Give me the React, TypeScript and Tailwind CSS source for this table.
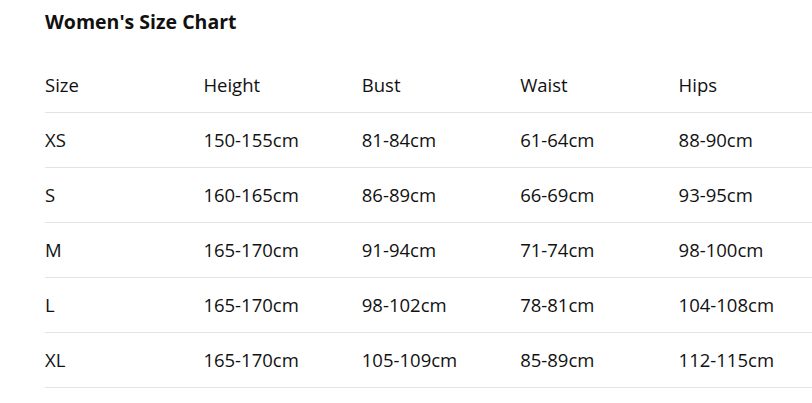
import React from "react";

const headers = ["Size", "Height", "Bust", "Waist", "Hips"];

const rows = [
  ["XS", "150-155cm", "81-84cm", "61-64cm", "88-90cm"],
  ["S", "160-165cm", "86-89cm", "66-69cm", "93-95cm"],
  ["M", "165-170cm", "91-94cm", "71-74cm", "98-100cm"],
  ["L", "165-170cm", "98-102cm", "78-81cm", "104-108cm"],
  ["XL", "165-170cm", "105-109cm", "85-89cm", "112-115cm"],
];

export default function App() {
  return (
    <div
      className="min-h-screen w-full overflow-hidden bg-white pl-[45px] pt-[8px] text-[#111]"
      style={{ fontFamily: '"Open Sans", "Noto Sans", sans-serif' }}
    >
      <h2 className="text-[19.5px] font-bold leading-[28px]">Women's Size Chart</h2>

      <div className="mt-[21px] w-[792px]">
        <div className="grid grid-cols-5 h-[56px] items-center border-b border-[#e3e3e3] text-[18.5px]">
          {headers.map((h) => (
            <div key={h}>{h}</div>
          ))}
        </div>
        {rows.map((r) => (
          <div
            key={r[0]}
            className="grid grid-cols-5 h-[55px] items-center border-b border-[#e3e3e3] text-[18.5px]"
          >
            {r.map((c, i) => (
              <div key={i}>{c}</div>
            ))}
          </div>
        ))}
      </div>
    </div>
  );
}
